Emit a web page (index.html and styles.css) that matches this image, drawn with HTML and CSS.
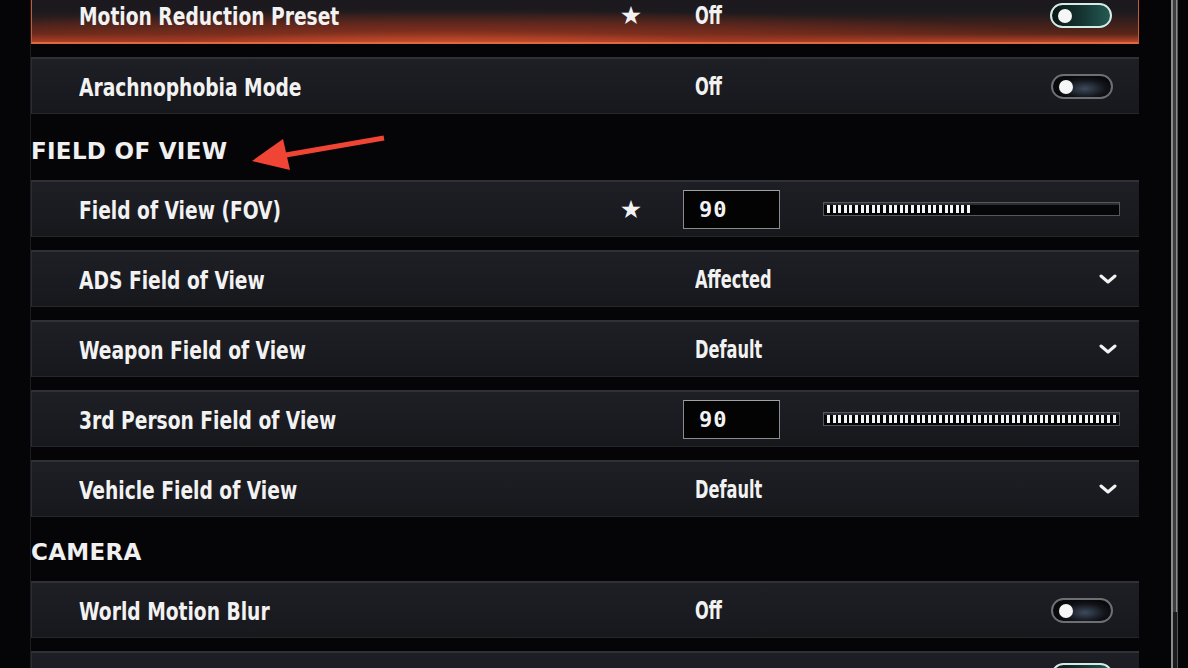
FILE: index.html
```html
<!DOCTYPE html>
<html lang="en">
<head>
  <meta charset="UTF-8">
  <meta name="viewport" content="width=device-width, initial-scale=1.0">
  <title>Settings - Accessibility</title>
  <link rel="stylesheet" href="styles.css">
</head>
<body>
  <div class="screen">
    <main class="settings">
      <div class="group">
        <div class="row active">
          <span class="label">Motion Reduction Preset</span>
          <span class="star">★</span>
          <span class="value">Off</span>
          <span class="toggle on"><span class="knob"></span></span>
        </div>
        <div class="row">
          <span class="label">Arachnophobia Mode</span>
          <span class="star"></span>
          <span class="value">Off</span>
          <span class="toggle"><span class="knob"></span></span>
        </div>
      </div>

      <h2 class="section-title">FIELD OF VIEW</h2>
      <div class="group">
        <div class="row">
          <span class="label">Field of View (FOV)</span>
          <span class="star">★</span>
          <span class="num-box">90</span>
          <span class="slider"><span class="fill" style="width: 50%;"></span></span>
        </div>
        <div class="row">
          <span class="label">ADS Field of View</span>
          <span class="star"></span>
          <span class="value">Affected</span>
          <svg class="chevron" width="18" height="11" viewBox="0 0 18 11"><path d="M2 2 L9 8 L16 2" fill="none" stroke="#f2f2f2" stroke-width="3" stroke-linecap="round" stroke-linejoin="round"/></svg>
        </div>
        <div class="row">
          <span class="label">Weapon Field of View</span>
          <span class="star"></span>
          <span class="value">Default</span>
          <svg class="chevron" width="18" height="11" viewBox="0 0 18 11"><path d="M2 2 L9 8 L16 2" fill="none" stroke="#f2f2f2" stroke-width="3" stroke-linecap="round" stroke-linejoin="round"/></svg>
        </div>
        <div class="row">
          <span class="label">3rd Person Field of View</span>
          <span class="star"></span>
          <span class="num-box">90</span>
          <span class="slider"><span class="fill" style="width: 100%;"></span></span>
        </div>
        <div class="row">
          <span class="label">Vehicle Field of View</span>
          <span class="star"></span>
          <span class="value">Default</span>
          <svg class="chevron" width="18" height="11" viewBox="0 0 18 11"><path d="M2 2 L9 8 L16 2" fill="none" stroke="#f2f2f2" stroke-width="3" stroke-linecap="round" stroke-linejoin="round"/></svg>
        </div>
      </div>

      <h2 class="section-title camera">CAMERA</h2>
      <div class="group">
        <div class="row">
          <span class="label">World Motion Blur</span>
          <span class="star"></span>
          <span class="value">Off</span>
          <span class="toggle"><span class="knob"></span></span>
        </div>
        <!-- next row is only peeking in at the bottom edge -->
        <div class="row peek">
          <span class="toggle on"><span class="knob"></span></span>
        </div>
      </div>
    </main>

    <div class="scrollbar"><div class="thumb"></div></div>

    <!-- red annotation arrow over the heading -->
    <svg class="annotation" width="150" height="50" viewBox="0 0 150 50">
      <line x1="144" y1="13" x2="40" y2="31" stroke="#f04434" stroke-width="5"/>
      <polygon points="12,36 43,14 50,45" fill="#f04434"/>
    </svg>
  </div>
</body>
</html>
```

FILE: styles.css
```css
body {
  margin: 0;
  background: #050507;
  font-family: 'DejaVu Sans Condensed', 'DejaVu Sans', sans-serif;
  color: #f2f2f2;
  overflow: hidden;
}
.screen {
  position: relative;
  display: flex;
  height: 668px;
  overflow: hidden;
}
.settings {
  width: 1108px;
  margin-left: 30px;
  margin-top: -13px;
  border-left: 1px solid #1c1d21;
}
.group {
  display: flex;
  flex-direction: column;
  gap: 13px;
}
.row {
  display: flex;
  align-items: center;
  height: 57px;
  flex: none;
  box-sizing: border-box;
  padding: 0 26px 0 47px;
  background: linear-gradient(180deg, #1e1f24 0%, #1a1b20 60%, #17181c 100%);
  border-top: 2px solid #303136;
  border-left: 1px solid #2c2d32;
  border-bottom: 1px solid #26272b;
}
.row.active {
  border: 1px solid #c45a33;
  border-bottom: 2px solid #e3673d;
  background:
    radial-gradient(ellipse 60% 70% at 38% 110%, rgba(214, 84, 48, 0.95) 0%, rgba(150, 52, 32, 0.6) 45%, rgba(40, 20, 20, 0) 100%),
    linear-gradient(180deg, #18181d 0%, #1d1a1e 45%, #5a2519 85%, #b8472b 100%);
}
.row.peek {
  align-items: flex-start;
  padding-top: 10px;
}
.label {
  display: inline-block;
  width: 543px;
  flex: none;
  margin-top: 2px;
  font-size: 25px;
  font-weight: bold;
  transform: scaleX(0.83);
  transform-origin: left center;
  white-space: nowrap;
}
.star {
  width: 18px;
  flex: none;
  display: flex;
  justify-content: center;
  font-family: 'DejaVu Sans', sans-serif;
  font-size: 25px;
}
.value {
  display: inline-block;
  margin-left: 55px;
  margin-top: 2px;
  font-size: 24px;
  font-weight: bold;
  transform: scaleX(0.75);
  transform-origin: left center;
  white-space: nowrap;
}
.toggle {
  margin-left: auto;
  position: relative;
  width: 62px;
  height: 25px;
  flex: none;
  box-sizing: border-box;
  border: 2px solid #6c6f74;
  border-radius: 13px;
  background: radial-gradient(ellipse 50% 60% at 55% 60%, #3d4b5c 0%, #121419 70%, #08090b 100%);
}
.toggle.on {
  border-color: #d4ece6;
  background: linear-gradient(90deg, #0b1716 0%, #153331 50%, #245a53 100%);
}
.knob {
  position: absolute;
  left: 6px;
  top: 4px;
  width: 14px;
  height: 14px;
  border-radius: 50%;
  background: #f6f6f6;
}
.chevron {
  margin-left: auto;
  margin-right: -4px;
}
.num-box {
  margin-left: 43px;
  width: 97px;
  height: 39px;
  box-sizing: border-box;
  padding-left: 15px;
  display: flex;
  align-items: center;
  background: #030304;
  border: 1px solid #8a8b8e;
  border-top-color: #a0a1a4;
  font-family: 'DejaVu Sans Mono', monospace;
  font-size: 22px;
  font-weight: bold;
  letter-spacing: 1px;
}
.slider {
  margin-left: 43px;
  margin-right: -8px;
  width: 297px;
  height: 14px;
  box-sizing: border-box;
  padding: 2px 3px;
  border: 1px solid #55575b;
  background: #050608;
  box-shadow: inset 0 2px 0 #2a2d31;
}
.fill {
  display: block;
  height: 100%;
  background: repeating-linear-gradient(90deg, #f4f4f4 0 3px, transparent 3px 5.6px);
}
.section-title {
  margin: 0;
  height: 66px;
  box-sizing: border-box;
  padding-top: 7px;
  display: flex;
  align-items: center;
  font-family: 'DejaVu Sans', sans-serif;
  font-size: 23px;
  font-weight: bold;
  letter-spacing: 0.3px;
  color: #f0f0f0;
}
.section-title.camera {
  height: 64px;
  padding-top: 5px;
}
.scrollbar {
  margin-left: 32px;
  width: 7px;
  height: 668px;
  box-sizing: border-box;
  border-left: 2px solid #8a8b8e;
  border-right: 1px solid #55565a;
  background: #1a1b1d;
}
.thumb {
  height: 612px;
  background: #3c3d40;
  border-right: 1px solid #8a8b8e;
}
.annotation {
  position: absolute;
  left: 240px;
  top: 125px;
}
```
